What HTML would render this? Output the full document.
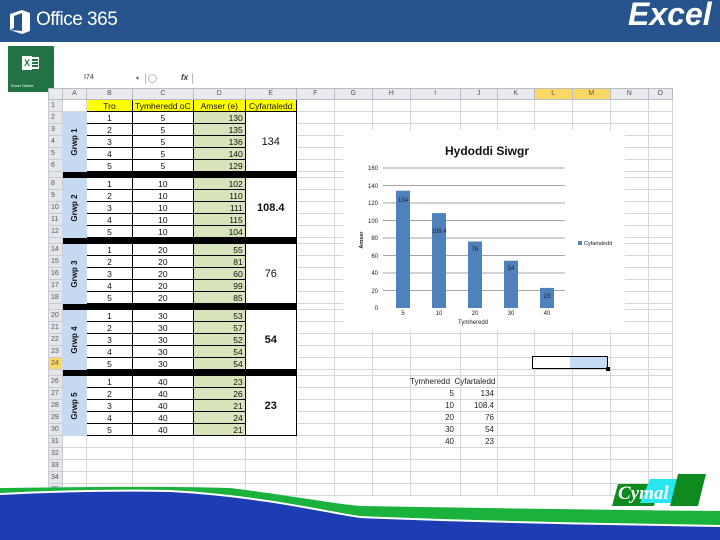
<!DOCTYPE html>
<html><head><meta charset="utf-8"><style>
*{margin:0;padding:0;box-sizing:border-box}
body{width:720px;height:540px;overflow:hidden;background:#fff;font-family:"Liberation Sans",sans-serif;position:relative}
.abs{position:absolute}
table{position:absolute;left:48px;top:88px;border-collapse:collapse;table-layout:fixed;font-size:8.5px;color:#111}
td{border:1px solid #d6d6d6;height:12px;padding:0 2px;white-space:nowrap;overflow:hidden;line-height:10px;text-align:center}
tr.h td{height:11px;background:#e8eaee;color:#555;font-size:7px;border-color:#b8bcc4}
td.rn{background:#e4e6ea;color:#555;font-size:7px;text-align:left;border-color:#c8ccd2}
tr.s td{height:6px;font-size:0;line-height:0}
tr.s td.bk{background:#000;border-color:#000}
.y{background:#ffff00;border:1px solid #000}
.b{border:1px solid #000}
.g{background:#d8e4bc;border:1px solid #000;text-align:right}
.lab{background:#c5d9f1;border:1px solid #c5d9f1;position:relative}
.lab span{position:absolute;left:50%;top:50%;transform:translate(-50%,-50%) rotate(-90deg);font-weight:bold;font-size:8px}
.av{border:1px solid #000;font-size:11px;background:#fff}
</style></head><body>
<div class="abs" style="left:0;top:0;width:720px;height:42px;background:#27548c"></div>
<svg class="abs" style="left:8px;top:10px" width="24" height="24" viewBox="0 0 24 24"><path d="M2 4 L14 0 L22 3 L22 21 L14 24 L2 20 L14 21 L14 3 L6 6 L6 18 L2 20Z" fill="#fff"/></svg>
<div class="abs" style="left:36px;top:9px;color:#fff;font-size:19px;letter-spacing:-0.5px">Office 365</div>
<div class="abs" style="left:628px;top:-4px;color:#fff;font-size:32px;font-weight:bold;font-style:italic">Excel</div>
<div class="abs" style="left:8px;top:46px;width:46px;height:46px;background:#217346"></div>
<div class="abs" style="left:22px;top:56px;width:10px;height:14px;background:#fff;color:#217346;font-size:9px;font-weight:bold;text-align:center;line-height:14px">X</div>
<div class="abs" style="left:31px;top:57px;width:8px;height:12px;border:1px solid #fff;background:repeating-linear-gradient(#fff 0 1px,#217346 1px 3px)"></div>
<div class="abs" style="left:11px;top:83px;color:#fff;font-size:4px">Excel Online</div>
<div class="abs" style="left:84px;top:74px;font-size:7px;color:#333">I74</div>
<div class="abs" style="left:136px;top:75px;font-size:6px;color:#555">▾</div>
<div class="abs" style="left:145px;top:73px;width:48px;height:11px;border-left:1px solid #bbb;border-right:1px solid #bbb"></div>
<div class="abs" style="left:148px;top:74px;width:9px;height:9px;border:1px solid #bbb;border-radius:50%"></div>
<div class="abs" style="left:181px;top:73px;font-size:8px;font-style:italic;font-weight:bold;color:#333">fx</div>
<table>
<colgroup><col style="width:14px"><col style="width:24px"><col style="width:46px"><col style="width:59px"><col style="width:52px"><col style="width:51px"><col style="width:38px"><col style="width:38px"><col style="width:38px"><col style="width:50px"><col style="width:37px"><col style="width:37px"><col style="width:38px"><col style="width:38px"><col style="width:38px"><col style="width:24px"></colgroup>
<tr class="h"><td></td><td>A</td><td>B</td><td>C</td><td>D</td><td>E</td><td>F</td><td>G</td><td>H</td><td>I</td><td>J</td><td>K</td><td style="background:#fbd865">L</td><td style="background:#fbd865">M</td><td>N</td><td>O</td></tr>
<tr><td class="rn">1</td><td></td><td class="y">Tro</td><td class="y">Tymheredd oC</td><td class="y">Amser (e)</td><td class="y">Cyfartaledd</td><td></td><td></td><td></td><td></td><td></td><td></td><td></td><td></td><td></td><td></td></tr>
<tr><td class="rn">2</td><td class="lab" rowspan="5"><span>Grwp 1</span></td><td class="b">1</td><td class="b">5</td><td class="g">130</td><td class="av" rowspan="5">134</td><td></td><td></td><td></td><td></td><td></td><td></td><td></td><td></td><td></td><td></td></tr>
<tr><td class="rn">3</td><td class="b">2</td><td class="b">5</td><td class="g">135</td><td></td><td></td><td></td><td></td><td></td><td></td><td></td><td></td><td></td><td></td></tr>
<tr><td class="rn">4</td><td class="b">3</td><td class="b">5</td><td class="g">136</td><td></td><td></td><td></td><td></td><td></td><td></td><td></td><td></td><td></td><td></td></tr>
<tr><td class="rn">5</td><td class="b">4</td><td class="b">5</td><td class="g">140</td><td></td><td></td><td></td><td></td><td></td><td></td><td></td><td></td><td></td><td></td></tr>
<tr><td class="rn">6</td><td class="b">5</td><td class="b">5</td><td class="g">129</td><td></td><td></td><td></td><td></td><td></td><td></td><td></td><td></td><td></td><td></td></tr>
<tr class="s"><td class="rn"></td><td class="bk"></td><td class="bk"></td><td class="bk"></td><td class="bk"></td><td class="bk"></td><td></td><td></td><td></td><td></td><td></td><td></td><td></td><td></td><td></td><td></td></tr>
<tr><td class="rn">8</td><td class="lab" rowspan="5"><span>Grwp 2</span></td><td class="b">1</td><td class="b">10</td><td class="g">102</td><td class="av" rowspan="5"><b>108.4</b></td><td></td><td></td><td></td><td></td><td></td><td></td><td></td><td></td><td></td><td></td></tr>
<tr><td class="rn">9</td><td class="b">2</td><td class="b">10</td><td class="g">110</td><td></td><td></td><td></td><td></td><td></td><td></td><td></td><td></td><td></td><td></td></tr>
<tr><td class="rn">10</td><td class="b">3</td><td class="b">10</td><td class="g">111</td><td></td><td></td><td></td><td></td><td></td><td></td><td></td><td></td><td></td><td></td></tr>
<tr><td class="rn">11</td><td class="b">4</td><td class="b">10</td><td class="g">115</td><td></td><td></td><td></td><td></td><td></td><td></td><td></td><td></td><td></td><td></td></tr>
<tr><td class="rn">12</td><td class="b">5</td><td class="b">10</td><td class="g">104</td><td></td><td></td><td></td><td></td><td></td><td></td><td></td><td></td><td></td><td></td></tr>
<tr class="s"><td class="rn"></td><td class="bk"></td><td class="bk"></td><td class="bk"></td><td class="bk"></td><td class="bk"></td><td></td><td></td><td></td><td></td><td></td><td></td><td></td><td></td><td></td><td></td></tr>
<tr><td class="rn">14</td><td class="lab" rowspan="5"><span>Grwp 3</span></td><td class="b">1</td><td class="b">20</td><td class="g">55</td><td class="av" rowspan="5">76</td><td></td><td></td><td></td><td></td><td></td><td></td><td></td><td></td><td></td><td></td></tr>
<tr><td class="rn">15</td><td class="b">2</td><td class="b">20</td><td class="g">81</td><td></td><td></td><td></td><td></td><td></td><td></td><td></td><td></td><td></td><td></td></tr>
<tr><td class="rn">16</td><td class="b">3</td><td class="b">20</td><td class="g">60</td><td></td><td></td><td></td><td></td><td></td><td></td><td></td><td></td><td></td><td></td></tr>
<tr><td class="rn">17</td><td class="b">4</td><td class="b">20</td><td class="g">99</td><td></td><td></td><td></td><td></td><td></td><td></td><td></td><td></td><td></td><td></td></tr>
<tr><td class="rn">18</td><td class="b">5</td><td class="b">20</td><td class="g">85</td><td></td><td></td><td></td><td></td><td></td><td></td><td></td><td></td><td></td><td></td></tr>
<tr class="s"><td class="rn"></td><td class="bk"></td><td class="bk"></td><td class="bk"></td><td class="bk"></td><td class="bk"></td><td></td><td></td><td></td><td></td><td></td><td></td><td></td><td></td><td></td><td></td></tr>
<tr><td class="rn">20</td><td class="lab" rowspan="5"><span>Grwp 4</span></td><td class="b">1</td><td class="b">30</td><td class="g">53</td><td class="av" rowspan="5"><b>54</b></td><td></td><td></td><td></td><td></td><td></td><td></td><td></td><td></td><td></td><td></td></tr>
<tr><td class="rn">21</td><td class="b">2</td><td class="b">30</td><td class="g">57</td><td></td><td></td><td></td><td></td><td></td><td></td><td></td><td></td><td></td><td></td></tr>
<tr><td class="rn">22</td><td class="b">3</td><td class="b">30</td><td class="g">52</td><td></td><td></td><td></td><td></td><td></td><td></td><td></td><td></td><td></td><td></td></tr>
<tr><td class="rn">23</td><td class="b">4</td><td class="b">30</td><td class="g">54</td><td></td><td></td><td></td><td></td><td></td><td></td><td></td><td></td><td></td><td></td></tr>
<tr><td class="rn" style="background:#fbd865">24</td><td class="b">5</td><td class="b">30</td><td class="g">54</td><td></td><td></td><td></td><td></td><td></td><td></td><td></td><td></td><td></td><td></td></tr>
<tr class="s"><td class="rn"></td><td class="bk"></td><td class="bk"></td><td class="bk"></td><td class="bk"></td><td class="bk"></td><td></td><td></td><td></td><td></td><td></td><td></td><td></td><td></td><td></td><td></td></tr>
<tr><td class="rn">26</td><td class="lab" rowspan="5"><span>Grwp 5</span></td><td class="b">1</td><td class="b">40</td><td class="g">23</td><td class="av" rowspan="5"><b>23</b></td><td></td><td></td><td></td><td></td><td></td><td></td><td></td><td></td><td></td><td></td></tr>
<tr><td class="rn">27</td><td class="b">2</td><td class="b">40</td><td class="g">26</td><td></td><td></td><td></td><td></td><td></td><td></td><td></td><td></td><td></td><td></td></tr>
<tr><td class="rn">28</td><td class="b">3</td><td class="b">40</td><td class="g">21</td><td></td><td></td><td></td><td></td><td></td><td></td><td></td><td></td><td></td><td></td></tr>
<tr><td class="rn">29</td><td class="b">4</td><td class="b">40</td><td class="g">24</td><td></td><td></td><td></td><td></td><td></td><td></td><td></td><td></td><td></td><td></td></tr>
<tr><td class="rn">30</td><td class="b">5</td><td class="b">40</td><td class="g">21</td><td></td><td></td><td></td><td></td><td></td><td></td><td></td><td></td><td></td><td></td></tr>
<tr><td class="rn">31</td><td></td><td></td><td></td><td></td><td></td><td></td><td></td><td></td><td></td><td></td><td></td><td></td><td></td><td></td><td></td></tr>
<tr><td class="rn">32</td><td></td><td></td><td></td><td></td><td></td><td></td><td></td><td></td><td></td><td></td><td></td><td></td><td></td><td></td><td></td></tr>
<tr><td class="rn">33</td><td></td><td></td><td></td><td></td><td></td><td></td><td></td><td></td><td></td><td></td><td></td><td></td><td></td><td></td><td></td></tr>
<tr><td class="rn">34</td><td></td><td></td><td></td><td></td><td></td><td></td><td></td><td></td><td></td><td></td><td></td><td></td><td></td><td></td><td></td></tr>
<tr><td class="rn">35</td><td></td><td></td><td></td><td></td><td></td><td></td><td></td><td></td><td></td><td></td><td></td><td></td><td></td><td></td><td></td></tr>
</table>
<div class="abs" style="left:532px;top:356px;width:76px;height:13px;border:1.5px solid #000;background:linear-gradient(90deg,#fff 50%,#c6dcf5 50%)"></div>
<div class="abs" style="left:606px;top:367px;width:4px;height:4px;background:#000"></div>
<div class="abs" style="left:410px;top:376px;font-size:8px;color:#222;line-height:12px">Tymheredd&nbsp; Cyfartaledd</div>
<div class="abs" style="left:420px;top:388px;width:34px;font-size:8px;color:#222;line-height:12px;text-align:right">5<br>10<br>20<br>30<br>40</div>
<div class="abs" style="left:460px;top:388px;width:34px;font-size:8px;color:#222;line-height:12px;text-align:right">134<br>108.4<br>76<br>54<br>23</div>
<svg class="abs" style="left:343px;top:130px" width="282" height="200" viewBox="343 130 282 200" font-family="Liberation Sans,sans-serif">
<rect x="343" y="130" width="282" height="200" fill="#fff"/>
<text x="487" y="155" font-size="12" font-weight="bold" text-anchor="middle" fill="#111">Hydoddi Siwgr</text>
<g stroke="#888" stroke-width="0.8">
<line x1="383" y1="168" x2="565" y2="168"/><line x1="383" y1="185.5" x2="565" y2="185.5"/><line x1="383" y1="203" x2="565" y2="203"/><line x1="383" y1="220.5" x2="565" y2="220.5"/><line x1="383" y1="238" x2="565" y2="238"/><line x1="383" y1="255.5" x2="565" y2="255.5"/><line x1="383" y1="273" x2="565" y2="273"/><line x1="383" y1="290.5" x2="565" y2="290.5"/>
</g>
<g font-size="6" fill="#222" text-anchor="end">
<text x="378" y="170">160</text><text x="378" y="188">140</text><text x="378" y="205">120</text><text x="378" y="223">100</text><text x="378" y="240">80</text><text x="378" y="258">60</text><text x="378" y="275">40</text><text x="378" y="293">20</text><text x="378" y="310">0</text>
</g>
<g fill="#4f81bd">
<rect x="396" y="190.7" width="14" height="117.3"/><rect x="432" y="213.1" width="14" height="94.9"/><rect x="468" y="241.5" width="14" height="66.5"/><rect x="504" y="260.7" width="14" height="47.3"/><rect x="540" y="287.9" width="14" height="20.1"/>
</g>
<g font-size="6" fill="#222" text-anchor="middle">
<text x="403" y="202">134</text><text x="439" y="233">108.4</text><text x="475" y="251">76</text><text x="511" y="270">54</text><text x="547" y="298">23</text>
<text x="403" y="315">5</text><text x="439" y="315">10</text><text x="475" y="315">20</text><text x="511" y="315">30</text><text x="547" y="315">40</text>
<text x="473" y="324">Tymheredd</text>
</g>
<text x="363" y="240" font-size="5.5" font-weight="bold" fill="#222" text-anchor="middle" transform="rotate(-90 363 240)">Amser</text>
<rect x="578" y="241" width="4" height="4" fill="#4f81bd"/>
<text x="584" y="245" font-size="5.5" fill="#222">Cyfartaledd</text>
</svg>
<svg class="abs" style="left:0;top:470px" width="720" height="70" viewBox="0 470 720 70">
<path d="M0 488 C80 487 160 486 230 488 C280 494 330 503 360 506 C480 508 600 510 720 511 L720 540 L0 540Z" fill="#1ab23c"/>
<path d="M0 493 C60 490 120 489 170 490 C260 495 320 510 360 516 C480 521 600 523 720 525 L720 540 L0 540Z" fill="#fff"/>
<path d="M0 495 C60 492 120 491 170 492 C260 497 320 512 360 518 C480 523 600 525 720 527 L720 540 L0 540Z" fill="#1e3cb4"/>
</svg>
<svg class="abs" style="left:608px;top:472px" width="100" height="38" viewBox="608 472 100 38">
<polygon points="618,484 660,484 654,506 612,506" fill="#0f8a1e"/>
<polygon points="650,479 685,479 676,503 640,503" fill="#27e6ee"/>
<polygon points="678,474 706,474 698,506 670,506" fill="#0f8a1e"/>
<text x="618" y="499" font-family="Liberation Serif,serif" font-size="19" font-weight="bold" font-style="italic" fill="#fff">Cymal</text>
</svg>
</body></html>
